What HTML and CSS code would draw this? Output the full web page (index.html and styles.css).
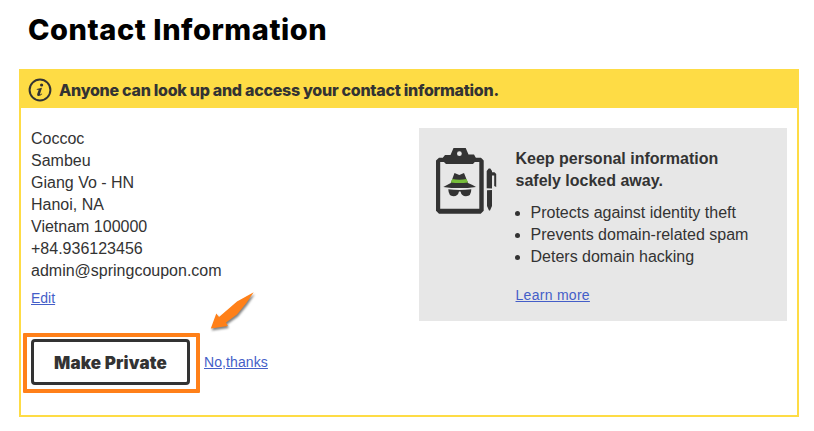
FILE: index.html
```html
<!DOCTYPE html>
<html lang="en">
<head>
  <meta charset="UTF-8" />
  <meta name="viewport" content="width=device-width, initial-scale=1.0"/>
  <title>Contact Information</title>
  <link rel="stylesheet" href="styles.css">
</head>
<body>
  <h1>Contact Information</h1>

  <div class="panel">
    <div class="notice">
      <svg class="info-icon" viewBox="0 0 24 24">
        <circle cx="12" cy="12" r="10.4" fill="none" stroke="#333" stroke-width="2"/>
        <circle cx="13.6" cy="7" r="1.6" fill="#333"/>
        <path d="M8.8 10.9 L14 9.8 L12 16 Q11.9 17 13.8 15.4 L14.3 16 Q12 18.4 10 18 Q8.7 17.5 9.2 16 L10.7 11.7 L8.7 11.8 Z" fill="#333"/>
      </svg>
      <h2>Anyone can look up and access your contact information.</h2>
    </div>

    <div class="content">
      <div class="contact">
        <address>
          Coccoc<br>
          Sambeu<br>
          Giang Vo - HN<br>
          Hanoi, NA<br>
          Vietnam 100000<br>
          +84.936123456<br>
          admin@springcoupon.com
        </address>
        <a class="edit" href="#">Edit</a>
        <div class="actions">
          <button class="private" type="button">Make Private</button>
          <a class="decline" href="#">No,thanks</a>
          <div class="highlight"></div>
          <svg class="arrow" viewBox="0 0 50 44">
            <path d="M44.7 2.2 L37 13.5 L28 24.5 L17 32.5 L18.8 36 L1.8 38.4 L7.3 23.5 L10 27 L28 11.5 Z" fill="#ff8019"/>
          </svg>
        </div>
      </div>

      <div class="privacy">
        <svg class="clipboard" viewBox="0 0 62 68">
          <path fill="#333" fill-rule="evenodd" d="M4 10.7 H46 L48.7 13.5 V63.7 L45.7 66.7 H4 L1 63.7 V13.5 Z M5.2 15 V61.8 H44.3 V15 Z"/>
          <path fill="#333" fill-rule="evenodd" d="M18.5 1 H30.7 L33.5 7.5 H39 L40.7 10.5 V14 L38 17 H11 L8 14 V10.5 L10 8 H15.5 Z M24.4 4.3 A2.4 2.4 0 1 0 24.4 9.1 A2.4 2.4 0 1 0 24.4 4.3 Z"/>
          <path fill="#333" d="M19.5 26 L24.3 28 L29 26 L33 36 Q38 38 41 39.9 Q24.5 42.3 8.3 39.9 Q12 38 15.8 36 Z"/>
          <path fill="#76bd3a" d="M17.2 32 Q24.4 33.3 31.6 32 L33 35.5 Q24.4 36.5 15.8 35.5 Z"/>
          <path fill="#333" d="M13.3 42.3 Q24.5 43.8 36.3 42.3 Q36.3 49.3 31 49.3 Q26.5 49.3 25.5 44.6 H24 Q23 49.3 18.5 49.3 Q13.5 49.3 13.3 42.3 Z"/>
          <path fill="#333" d="M51.7 41.3 V24 L53.7 21.5 H55.3 L57 24 V25.2 H59.5 L61.2 27 V40 L59.2 39 V28.5 H57 V41.5 Z M52 43.2 L57 43 V59 L55 63.5 H54 L52 59 Z"/>
        </svg>
        <div class="privacy-text">
          <h3>Keep personal information safely locked away.</h3>
          <ul>
            <li>Protects against identity theft</li>
            <li>Prevents domain-related spam</li>
            <li>Deters domain hacking</li>
          </ul>
          <a class="learn" href="#">Learn more</a>
        </div>
      </div>
    </div>
  </div>
</body>
</html>
```
FILE: styles.css
```css
* {
  box-sizing: border-box;
}

body {
  margin: 0;
  padding: 12px 15px 0 19px;
  font-family: "Liberation Sans", Arial, sans-serif;
  font-size: 16px;
  line-height: 22px;
  color: #333;
  background: #fff;
}

h1 {
  margin: 0 0 22px 9px;
  font-family: Inter, sans-serif;
  font-size: 29px;
  font-weight: 800;
  line-height: 35px;
  letter-spacing: 0.55px;
  color: #000;
}

a {
  font-size: 14px;
  color: #445ec8;
}

.panel {
  height: 348px;
  border: 2px solid #fedc45;
}

.notice {
  display: flex;
  align-items: center;
  gap: 7px;
  height: 37px;
  padding-left: 7px;
  background: #fedc45;
}

.info-icon {
  width: 24px;
  height: 24px;
}

h2 {
  margin: 1px 0 0;
  font-family: Inter, sans-serif;
  font-size: 16px;
  font-weight: 800;
  letter-spacing: -0.27px;
}

.content {
  display: flex;
  justify-content: space-between;
  align-items: flex-start;
  padding: 20px 10px 0;
}

address {
  font-style: normal;
}

.edit {
  display: block;
  width: max-content;
  margin-top: 5px;
}

.actions {
  position: relative;
  display: flex;
  align-items: center;
  gap: 14px;
  margin-top: 30px;
}

.private {
  width: 159px;
  height: 46px;
  padding: 2px 0 0;
  border: 3px solid #333;
  border-radius: 4px;
  background: #fff;
  font-family: Inter, sans-serif;
  font-size: 17px;
  font-weight: 900;
  letter-spacing: 0.15px;
  color: #333;
}

.decline {
  letter-spacing: 0.1px;
}

/* callout drawn over the button */
.highlight {
  position: absolute;
  left: -8px;
  top: -6px;
  width: 177px;
  height: 60px;
  border: 4px solid #ff8019;
  border-radius: 1px;
}

.arrow {
  position: absolute;
  left: 178px;
  top: -49px;
  width: 50px;
  height: 44px;
  filter: drop-shadow(1px 2px 1px rgba(0, 0, 0, 0.5));
}

.privacy {
  display: flex;
  gap: 18.5px;
  width: 368px;
  height: 193px;
  padding: 19px 16px;
  background: #e7e7e7;
}

.clipboard {
  flex: none;
  width: 62px;
  height: 68px;
}

.privacy-text {
  width: 250px;
  padding-top: 1px;
}

h3 {
  width: 220px;
  margin: 0 0 10px;
  font-size: 16px;
}

ul {
  margin: 0 0 16px;
  padding-left: 15px;
}

.learn {
  letter-spacing: 0.28px;
}
```
